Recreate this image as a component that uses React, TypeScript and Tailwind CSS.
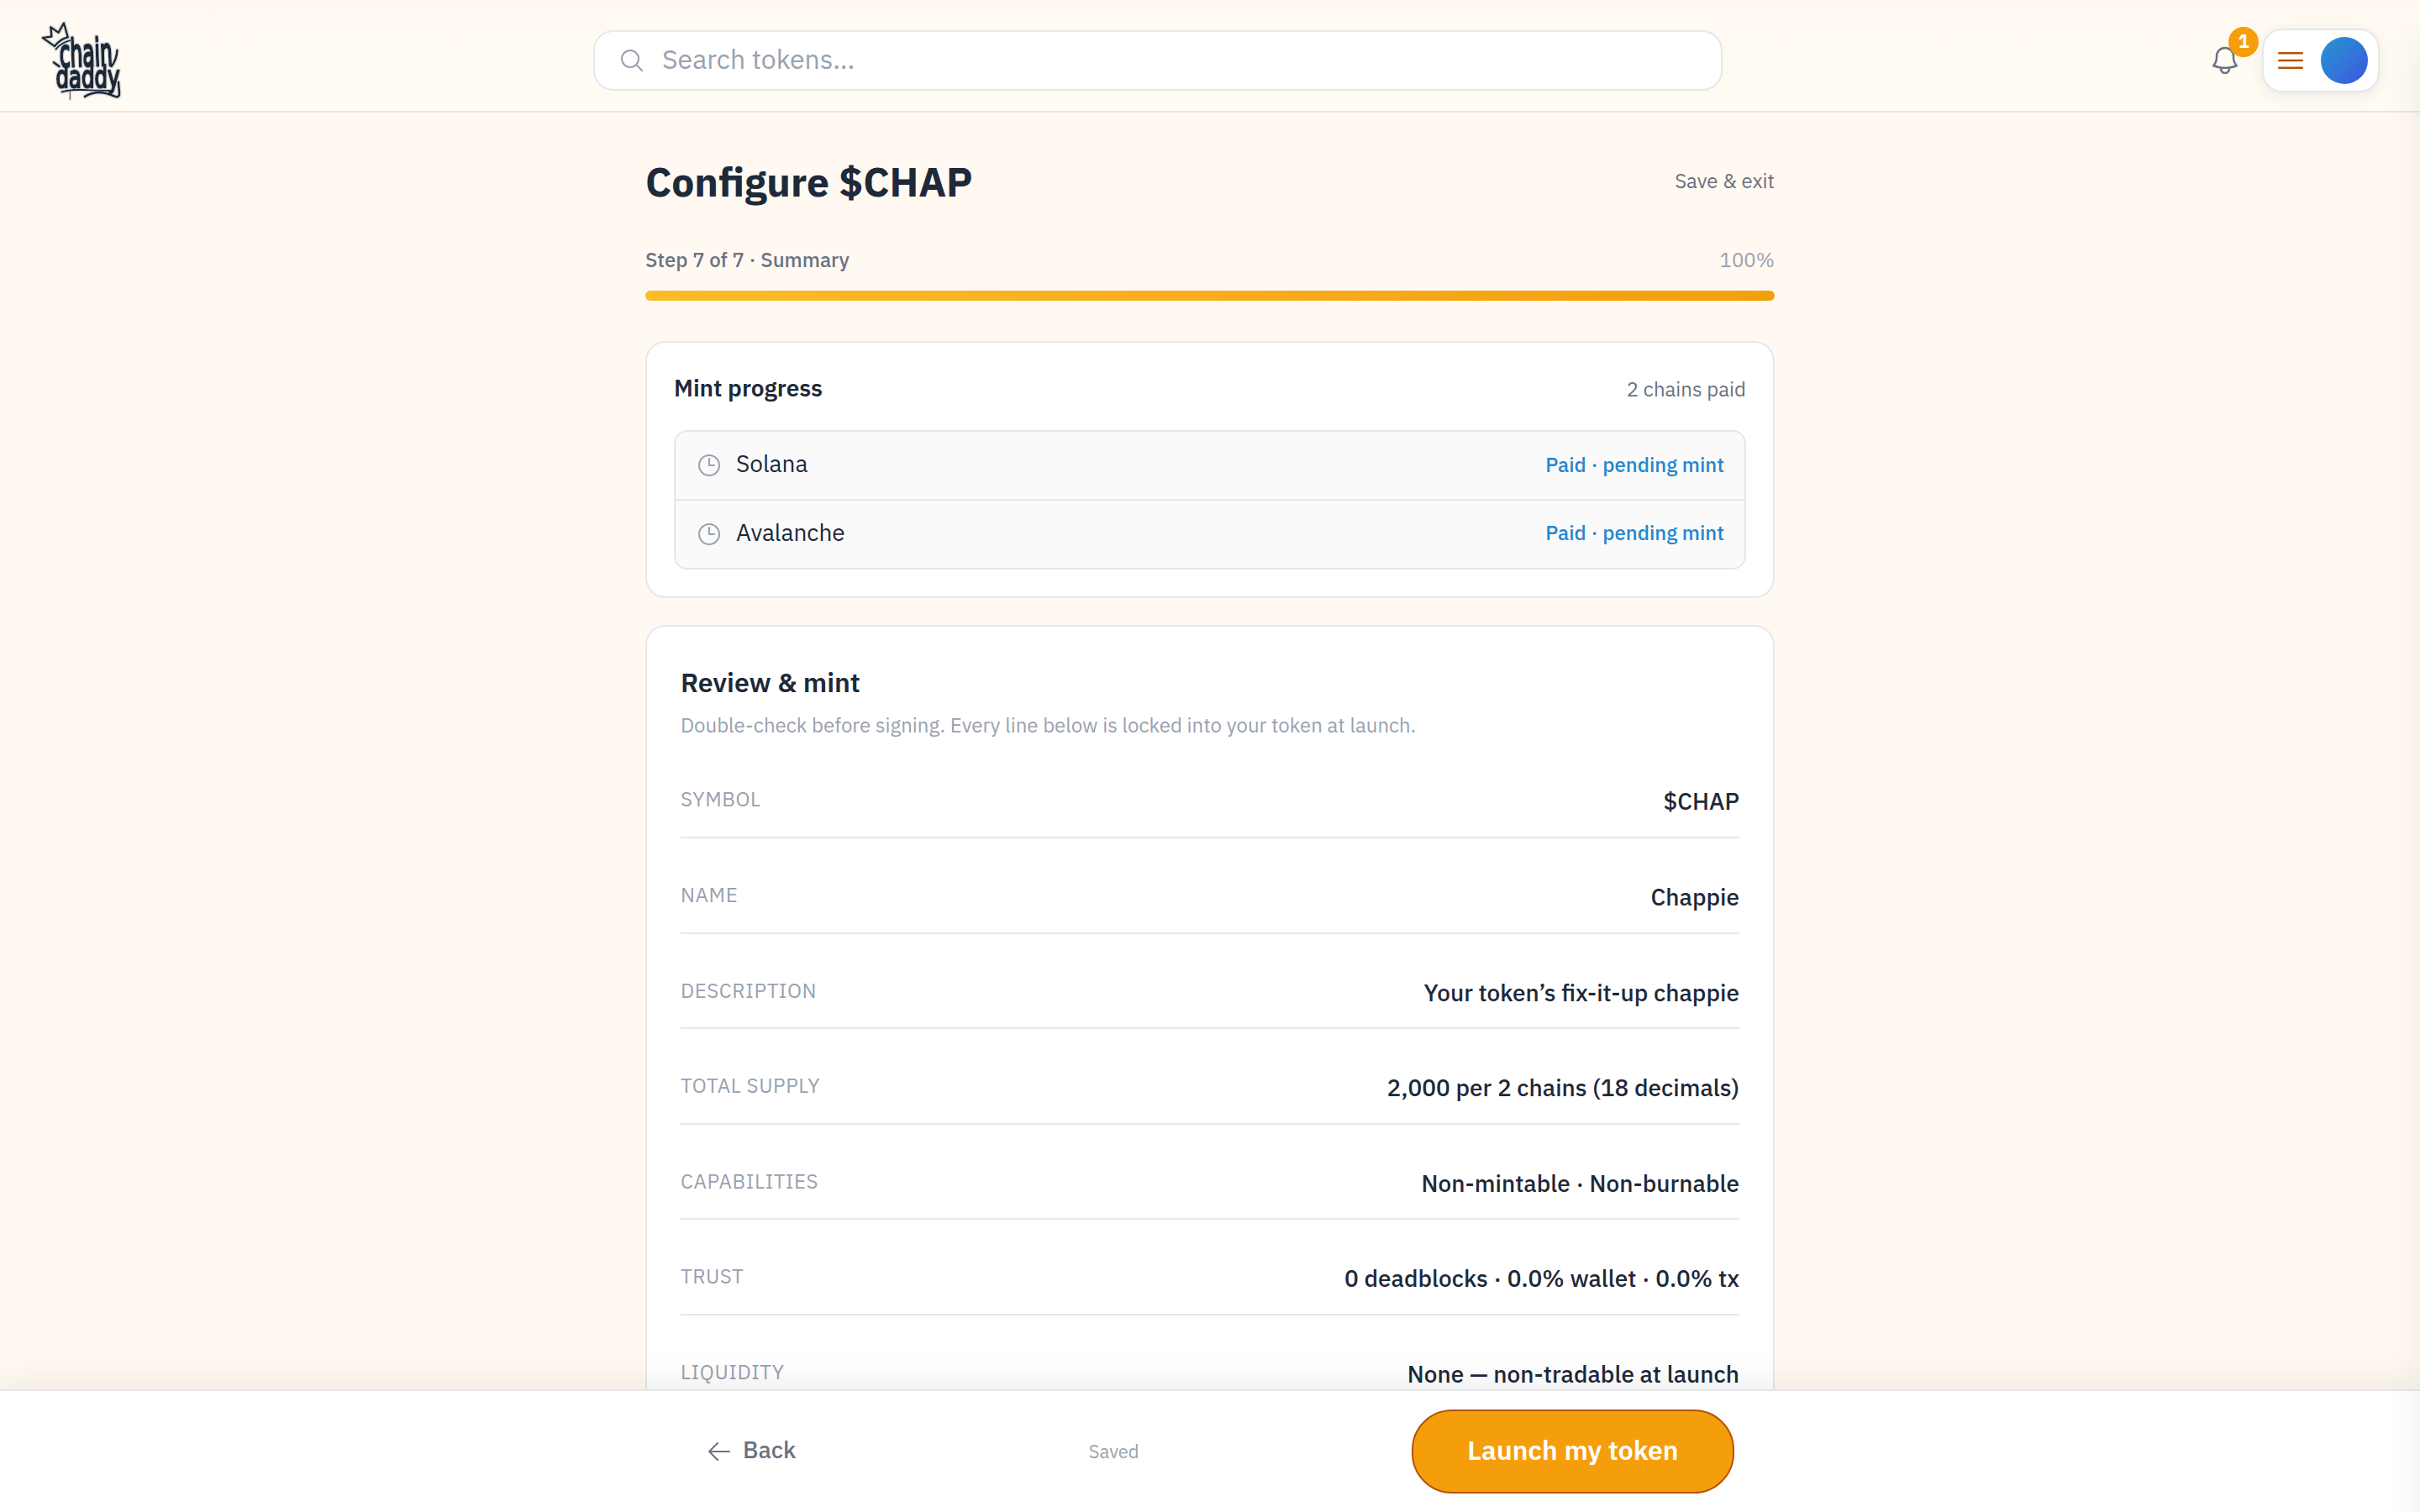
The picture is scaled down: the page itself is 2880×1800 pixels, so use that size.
import React from 'react';

const chains = [
  { name: 'Solana', status: 'Paid · pending mint' },
  { name: 'Avalanche', status: 'Paid · pending mint' },
];

const summary = [
  { label: 'Symbol', value: '$CHAP' },
  { label: 'Name', value: 'Chappie' },
  { label: 'Description', value: 'Your token’s fix-it-up chappie' },
  { label: 'Total supply', value: '2,000 per 2 chains (18 decimals)' },
  { label: 'Capabilities', value: 'Non-mintable · Non-burnable' },
  { label: 'Trust', value: '0 deadblocks · 0.0% wallet · 0.0% tx' },
  { label: 'Liquidity', value: 'None — non-tradable at launch' },
];

const icons = {
  search: 'm21 21-5.197-5.197m0 0A7.5 7.5 0 1 0 5.196 5.196a7.5 7.5 0 0 0 10.607 10.607Z',
  bell: 'M14.857 17.082a23.848 23.848 0 0 0 5.454-1.31A8.967 8.967 0 0 1 18 9.75V9A6 6 0 0 0 6 9v.75a8.967 8.967 0 0 1-2.312 6.022c1.733.64 3.56 1.085 5.455 1.31m5.714 0a24.255 24.255 0 0 1-5.714 0m5.714 0a3 3 0 1 1-5.714 0',
  menu: 'M3.75 6.75h16.5M3.75 12h16.5m-16.5 5.25h16.5',
  clock: 'M12 6v6h4.5m4.5 0a9 9 0 1 1-18 0 9 9 0 0 1 18 0Z',
  back: 'M10.5 19.5 3 12m0 0 7.5-7.5M3 12h18',
};

interface IconProps {
  name: keyof typeof icons;
  className?: string;
}

const Icon: React.FC<IconProps> = ({ name, className }) => (
  <svg
    viewBox="0 0 24 24"
    fill="none"
    stroke="currentColor"
    strokeWidth={1.5}
    strokeLinecap="round"
    strokeLinejoin="round"
    className={className}
  >
    <path d={icons[name]} />
  </svg>
);

const Logo: React.FC = () => (
  <svg viewBox="48 24 96 96" className="size-24 overflow-visible font-['DejaVu_Sans',sans-serif] text-[29px]">
    {/* Sticker outline behind the lettering */}
    <filter id="sticker" x="-10%" y="-10%" width="120%" height="120%">
      <feMorphology in="SourceAlpha" operator="dilate" radius="1.4" result="grown" />
      <feGaussianBlur in="grown" stdDeviation="0.6" result="soft" />
      <feFlood floodColor="#d9dbdd" />
      <feComposite in2="soft" operator="in" result="halo" />
      <feMerge>
        <feMergeNode in="halo" />
        <feMergeNode in="SourceGraphic" />
      </feMerge>
    </filter>
    <g filter="url(#sticker)" fill="none" stroke="#1f2937" strokeWidth={2.8} strokeLinejoin="round" strokeLinecap="round">
      <path d="M50.8 45 61.5 43.5 60.3 32.2 69.5 38.8 76 27.5 80.8 44.3Q71 47 65 55Z" strokeWidth={2.6} />
      <path d="M66.5 58.5Q73 51 83 48.3" strokeWidth={2.2} />
      <path d="M64 74.3 70.5 79" />
      <path d="M132.5 79Q138.5 72 139.5 60" />
      <path d="M73.5 109.5Q84 106 100 107T134 108" strokeWidth={2.2} />
      <path d="M141 98 142 112Q141.5 117 136 114.5 116 105.5 101 115" />
      <path d="M83.3 109V118.5" strokeWidth={1} />
      <g fill="#1f2937" strokeWidth={2}>
        <text transform="rotate(-2 104 70) translate(71 78.5) scale(1 1.56)" textLength="63" lengthAdjust="spacingAndGlyphs">chain</text>
        <text transform="translate(66.5 103.5) scale(1 1.2)" textLength="76" lengthAdjust="spacingAndGlyphs">daddy</text>
      </g>
    </g>
  </svg>
);

const Header: React.FC = () => (
  <header className="flex h-[134px] shrink-0 items-center justify-between border-b-2 border-gray-200 bg-linear-to-b from-[#fff9f2] to-[#fffbf2] px-12 pt-3">
    <Logo />
    <div className="flex h-[72px] w-[1344px] items-center gap-5 rounded-3xl border-2 border-gray-200 bg-white px-7 text-gray-400">
      <Icon name="search" className="size-8" />
      <span className="pb-[4px] text-[32px] leading-[48px]">Search tokens...</span>
    </div>
    <div className="flex items-center gap-2">
      <button className="relative flex size-[72px] items-center justify-center text-gray-500">
        <Icon name="bell" className="size-10" />
        <span className="absolute -top-1 -right-1 flex size-9 items-center justify-center rounded-full bg-[#f59e0b] pb-[3px] text-[22px] leading-none font-bold text-white">
          1
        </span>
      </button>
      <button className="flex items-center gap-4 rounded-3xl border-2 border-gray-200 bg-white px-3 py-2 text-[#b45309] shadow-[0_4px_16px_rgba(0,0,0,0.07)]">
        <Icon name="menu" className="size-10" />
        <span className="size-14 rounded-full bg-linear-to-br from-[#2794d0] to-[#3b55e0]" />
      </button>
    </div>
  </header>
);

const MintProgress: React.FC = () => (
  <section className="mt-12 rounded-3xl border-2 border-gray-200 bg-white p-8">
    <div className="flex h-11 items-baseline justify-between pt-px">
      <h2 className="text-[28px] leading-[42px] font-semibold">Mint progress</h2>
      <span className="text-[24px] leading-[36px] text-gray-500">{chains.length} chains paid</span>
    </div>
    <ul className="mt-7 divide-y-2 divide-gray-200 rounded-2xl border-2 border-gray-200 bg-[#fafafa]">
      {chains.map((chain) => (
        <li key={chain.name} className="group box-content flex h-20 items-center gap-4 px-6">
          <Icon name="clock" className="size-8 text-gray-400" />
          <span className="flex-1 pb-[5px] text-[28px] leading-[42px]">{chain.name}</span>
          <span className="pb-[3px] text-[24px] leading-[36px] font-medium text-[#2487cf] group-last:pb-[5px]">{chain.status}</span>
        </li>
      ))}
    </ul>
  </section>
);

const Review: React.FC = () => (
  <section className="mt-8 rounded-3xl border-2 border-gray-200 bg-white px-10 pt-[42px] pb-10">
    <h2 className="text-[32px] leading-[48px] font-semibold">Review &amp; mint</h2>
    <p className="mt-[9px] text-[24px] leading-[36px] text-gray-400">
      Double-check before signing. Every line below is locked into your token at launch.
    </p>
    <dl className="mt-[3.4px]">
      {summary.map((row) => (
        <div key={row.label} className="flex h-[113.6px] items-start justify-between border-b-2 border-gray-200 pt-[49px]">
          <dt className="text-[24px] leading-[36px] tracking-[0.025em] text-gray-400 uppercase">{row.label}</dt>
          <dd className="text-[28px] leading-[42px] font-medium">{row.value}</dd>
        </div>
      ))}
    </dl>
  </section>
);

const Footer: React.FC = () => (
  <footer className="relative z-10 flex h-[146px] shrink-0 justify-center border-t-2 border-gray-200 bg-white shadow-[0_-8px_40px_rgba(0,0,0,0.07)]">
    <div className="flex w-[1248px] items-center justify-between">
      <button className="flex items-center gap-3 px-6 text-gray-500">
        <Icon name="back" className="size-8" />
        <span className="pb-[4px] text-[28px] leading-[42px] font-medium">Back</span>
      </button>
      <span className="text-[22px] leading-[32px] text-gray-400">Saved</span>
      <button className="flex h-[100px] w-96 items-center justify-center rounded-[48px] border-2 border-[#b45309] bg-[#f59e0b] pb-[4px] text-[32px] leading-[48px] font-semibold text-white">
        Launch my token
      </button>
    </div>
  </footer>
);

export default function App() {
  return (
    <div className="relative flex h-[1800px] w-[2880px] flex-col overflow-hidden bg-[#fff9f2] font-['IBM_Plex_Sans',Roboto,sans-serif] text-gray-800">
      <Header />
      <main className="min-h-0 flex-1 overflow-hidden">
        <div className="mx-auto w-[1344px] pt-[50px]">
          <div className="flex items-center justify-between">
            <h1 className="text-[48px] leading-[64px] font-bold">Configure $CHAP</h1>
            <button className="pb-[2px] text-[24px] leading-[36px] text-gray-500">Save &amp; exit</button>
          </div>
          <div className="mt-11 flex items-center justify-between text-[24px] leading-[34px]">
            <span className="font-medium text-gray-500">Step 7 of 7 · Summary</span>
            <span className="text-gray-400">100%</span>
          </div>
          <div className="mt-5 h-3 rounded-full bg-linear-to-r from-[#fbbc24] to-[#f59e0b]" />
          <MintProgress />
          <Review />
        </div>
      </main>
      <Footer />
      {/* Closed drawer, only its shadow reaches the page */}
      <aside className="absolute top-0 left-full z-20 h-[1800px] w-[640px] shadow-[0_50px_44px_rgba(0,0,0,0.07)]" />
    </div>
  );
}
